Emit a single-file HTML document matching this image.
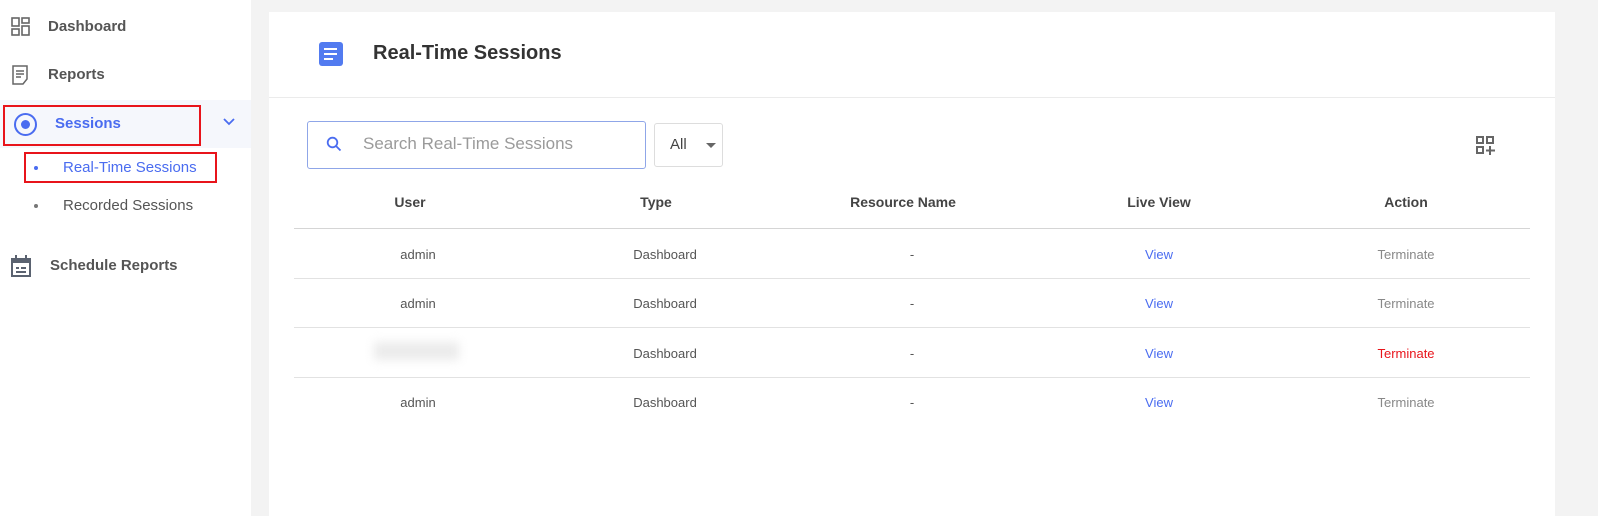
<!DOCTYPE html>
<html><head><style>
*{margin:0;padding:0;box-sizing:border-box}
body{width:1598px;height:516px;background:#f3f3f3;font-family:"Liberation Sans",sans-serif;position:relative;overflow:hidden}
.sb{position:absolute;left:0;top:0;width:251px;height:516px;background:#fff}
.it{position:absolute;font-size:15px;font-weight:bold;color:#555}
.card{position:absolute;left:269px;top:12px;width:1286px;height:504px;background:#fff}
.t{position:absolute;font-size:13px;color:#555;transform:translateX(-50%)}
.h{position:absolute;font-size:14px;font-weight:bold;color:#444;transform:translateX(-50%)}
.ln{position:absolute;left:25px;width:1236px;height:1px;background:#e2e2e2}
</style></head><body>
<div class="sb">
<svg style="position:absolute;left:11px;top:17px" width="20" height="20" viewBox="0 0 20 20" fill="none" stroke="#666" stroke-width="1.6"><rect x="1" y="1" width="7" height="8"/><rect x="11" y="1" width="7" height="5"/><rect x="1" y="12" width="7" height="6"/><rect x="11" y="9" width="7" height="9"/></svg>
<div class="it" style="left:48px;top:18px">Dashboard</div>
<svg style="position:absolute;left:12px;top:65px" width="16" height="20" viewBox="0 0 16 20" fill="none" stroke="#666" stroke-width="1.5"><path d="M1 1h14v13l-4 5H1z M4 6h8 M4 9h8 M4 12h5"/></svg>
<div class="it" style="left:48px;top:66px">Reports</div>
<div style="position:absolute;left:0;top:100px;width:251px;height:48px;background:#f5f7fc"></div>
<div style="position:absolute;left:3px;top:105px;width:198px;height:41px;border:2px solid #e8141b"></div>
<div style="position:absolute;left:14px;top:113px;width:23px;height:23px;border:2px solid #4a6cf0;border-radius:50%"></div>
<div style="position:absolute;left:21px;top:120px;width:9px;height:9px;background:#4a6cf0;border-radius:50%"></div>
<div class="it" style="left:55px;top:115px;color:#4a6cf0">Sessions</div>
<svg style="position:absolute;left:222px;top:117px" width="14" height="9" viewBox="0 0 14 9" fill="none" stroke="#4a6cf0" stroke-width="1.8"><path d="M2 2l5 5 5-5"/></svg>
<div style="position:absolute;left:24px;top:152px;width:193px;height:31px;border:2px solid #e8141b"></div>
<div style="position:absolute;left:34px;top:166px;width:4px;height:4px;border-radius:50%;background:#4a6cf0"></div>
<div class="it" style="left:63px;top:159px;font-weight:normal;color:#4a6cf0">Real-Time Sessions</div>
<div style="position:absolute;left:34px;top:204px;width:4px;height:4px;border-radius:50%;background:#777"></div>
<div class="it" style="left:63px;top:197px;font-weight:normal;color:#555">Recorded Sessions</div>
<svg style="position:absolute;left:11px;top:255px" width="20" height="22" viewBox="0 0 20 22" fill="#5a6270"><rect x="4" y="0" width="2" height="4"/><rect x="14" y="0" width="2" height="4"/><path d="M0 3h20v19H0z M2 8v12h16V8z"/><rect x="5" y="12" width="3" height="2"/><rect x="10" y="12" width="5" height="2"/><rect x="5" y="16" width="10" height="2"/></svg>
<div class="it" style="left:50px;top:257px">Schedule Reports</div>
</div>
<div class="card">
<div style="position:absolute;left:50px;top:30px;width:24px;height:24px;background:#527bf0;border-radius:3px"></div>
<div style="position:absolute;left:55px;top:36px;width:13px;height:2px;background:#fff"></div>
<div style="position:absolute;left:55px;top:41px;width:13px;height:2px;background:#fff"></div>
<div style="position:absolute;left:55px;top:46px;width:9px;height:2px;background:#fff"></div>
<div style="position:absolute;left:104px;top:30px;font-size:20px;font-weight:bold;color:#333">Real-Time Sessions</div>
<div style="position:absolute;left:0;top:85px;width:1286px;height:1px;background:#ebebeb"></div>
<div style="position:absolute;left:38px;top:109px;width:339px;height:48px;border:1px solid #8fa6e8;border-radius:3px"></div>
<svg style="position:absolute;left:57px;top:124px" width="16" height="16" viewBox="0 0 16 16" fill="none" stroke="#4a6cf0" stroke-width="1.8"><circle cx="6.5" cy="6.5" r="4.8"/><path d="M10 10l4.5 4.5"/></svg>
<div style="position:absolute;left:94px;top:122px;font-size:17px;color:#9a9a9a">Search Real-Time Sessions</div>
<div style="position:absolute;left:385px;top:111px;width:69px;height:44px;border:1px solid #ddd;border-radius:3px"></div>
<div style="position:absolute;left:401px;top:124px;font-size:15px;color:#444">All</div>
<div style="position:absolute;left:437px;top:131px;border:5px solid transparent;border-top:5px solid #666"></div>
<svg style="position:absolute;left:1207px;top:124px" width="20" height="20" viewBox="0 0 20 20" fill="none" stroke="#666" stroke-width="2"><rect x="1" y="1" width="6" height="6"/><rect x="11" y="1" width="6" height="6"/><rect x="1" y="11" width="6" height="6"/><path d="M14 10v9 M10 14.5h9"/></svg>
<div class="h" style="left:141px;top:182px">User</div>
<div class="h" style="left:387px;top:182px">Type</div>
<div class="h" style="left:634px;top:182px">Resource Name</div>
<div class="h" style="left:890px;top:182px">Live View</div>
<div class="h" style="left:1137px;top:182px">Action</div>
<div class="ln" style="top:216px;background:#d5d5d5"></div>
<div class="ln" style="top:266px"></div><div class="ln" style="top:315px"></div><div class="ln" style="top:365px"></div>
<div class="t" style="left:149px;top:235px">admin</div><div class="t" style="left:396px;top:235px">Dashboard</div><div class="t" style="left:643px;top:235px">-</div><div class="t" style="left:890px;top:235px;color:#4a6cf0">View</div><div class="t" style="left:1137px;top:235px;color:#888">Terminate</div>
<div class="t" style="left:149px;top:284px">admin</div><div class="t" style="left:396px;top:284px">Dashboard</div><div class="t" style="left:643px;top:284px">-</div><div class="t" style="left:890px;top:284px;color:#4a6cf0">View</div><div class="t" style="left:1137px;top:284px;color:#888">Terminate</div>
<div style="position:absolute;left:105px;top:330px;width:85px;height:18px;background:#ebebeb;filter:blur(5px)"></div><div class="t" style="left:396px;top:334px">Dashboard</div><div class="t" style="left:643px;top:334px">-</div><div class="t" style="left:890px;top:334px;color:#4a6cf0">View</div><div class="t" style="left:1137px;top:334px;color:#e8141b">Terminate</div>
<div class="t" style="left:149px;top:383px">admin</div><div class="t" style="left:396px;top:383px">Dashboard</div><div class="t" style="left:643px;top:383px">-</div><div class="t" style="left:890px;top:383px;color:#4a6cf0">View</div><div class="t" style="left:1137px;top:383px;color:#888">Terminate</div>
</div>
</body></html>
